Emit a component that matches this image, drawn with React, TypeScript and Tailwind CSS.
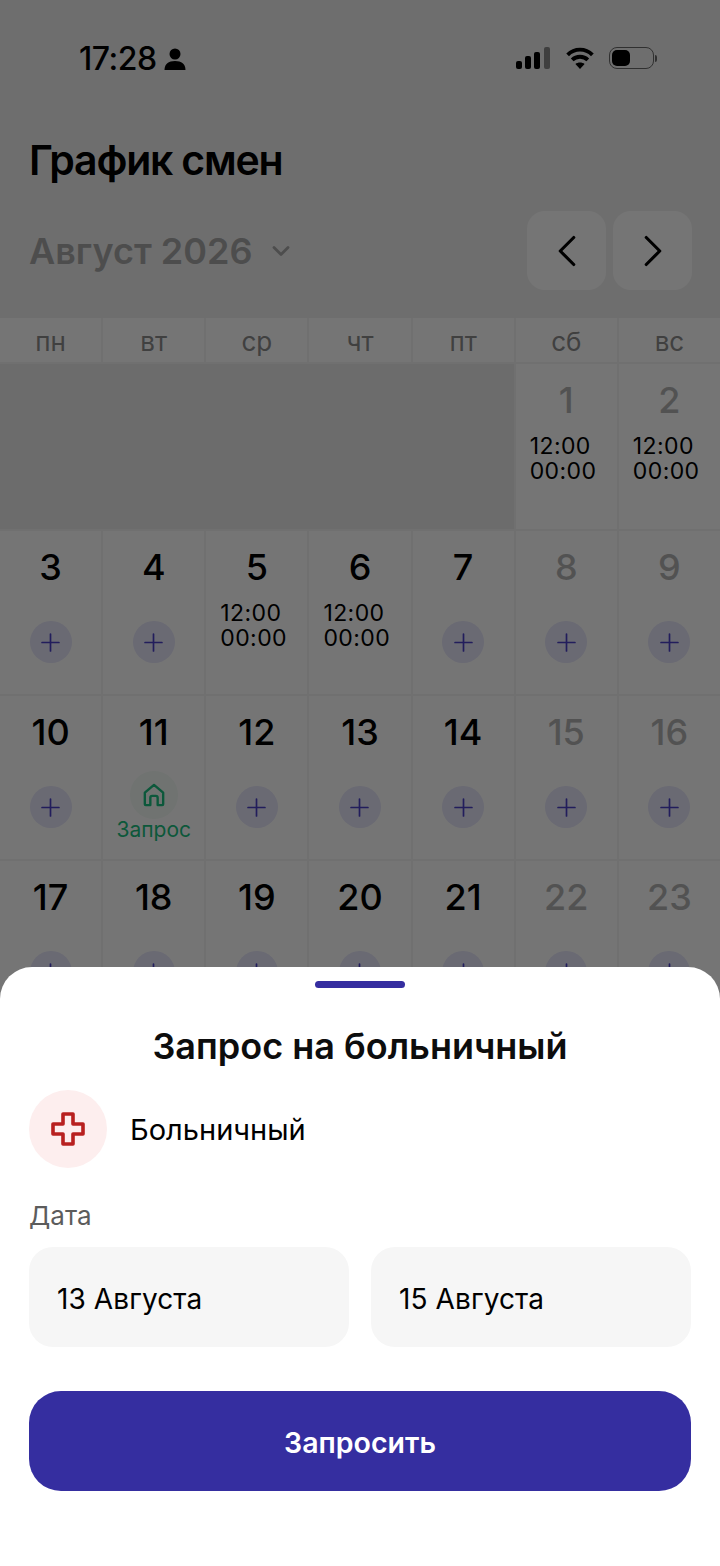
import React from 'react';
import { ChevronDown, ChevronLeft, ChevronRight, Plus } from 'lucide-react';

const WEEKDAYS = ['пн', 'вт', 'ср', 'чт', 'пт', 'сб', 'вс'];

type Day = { n: number; shift?: boolean; request?: boolean };

const DAYS: Day[] = [
  { n: 1, shift: true }, { n: 2, shift: true },
  { n: 3 }, { n: 4 }, { n: 5, shift: true }, { n: 6, shift: true }, { n: 7 }, { n: 8 }, { n: 9 },
  { n: 10 }, { n: 11, request: true }, { n: 12 }, { n: 13 }, { n: 14 }, { n: 15 }, { n: 16 },
  { n: 17 }, { n: 18 }, { n: 19 }, { n: 20 }, { n: 21 }, { n: 22 }, { n: 23 },
];

function StatusBar() {
  return (
    <div className="flex h-[116px] items-start justify-between pl-[79px] pr-[63px] pt-[41px]">
      <div className="flex items-center gap-[7px]">
        <span className="text-[32px] font-medium leading-[36px] tracking-[-0.5px] text-black">17:28</span>
        <svg width="22" height="22" viewBox="0 0 22 22" fill="black">
          <circle cx="11" cy="6" r="5.5" />
          <path d="M0.500 22c0-6 4-9 10.500-9s10.500 3 10.500 9z" />
        </svg>
      </div>
      <div className="flex items-center gap-[14px] pt-[6px]">
        <svg width="36" height="22" viewBox="0 0 36 22">
          <rect x="1" y="14" width="6" height="8" rx="2" fill="black" />
          <rect x="10" y="9" width="6" height="13" rx="2" fill="black" />
          <rect x="19" y="5" width="6" height="17" rx="2" fill="black" />
          <rect x="29" y="0" width="6" height="22" rx="2" fill="#8a8a8a" />
        </svg>
        <svg width="30" height="22" viewBox="0 0 30 24" fill="none" stroke="black" strokeWidth="4.2">
          <path d="M1.500 8.500C9 1 21 1 28.500 8.500" />
          <path d="M6.500 14C11 9.500 19 9.500 23.500 14" />
          <path d="M15 24l-5-5.500c2.500-2.200 7.500-2.200 10 0z" fill="black" stroke="none" />
        </svg>
        <div className="flex items-center gap-[1px]">
          <div className="flex h-[22px] w-[45px] items-center rounded-[8px] border-[1.5px] border-[#6a6a6a] p-[2px]">
            <div className="h-full w-[18px] rounded-[5px] bg-black" />
          </div>
          <div className="h-[7px] w-[2px] rounded-r-full bg-[#6a6a6a]" />
        </div>
      </div>
    </div>
  );
}

function Cell({ day }: { day: Day }) {
  const weekend = day.n % 7 === 1 || day.n % 7 === 2;
  return (
    <div className="flex flex-col items-center bg-white pt-[14px]">
      <span className={`text-[36px] font-medium leading-[44px] ${weekend ? 'text-[#b4b4b4]' : 'text-black'}`}>
        {day.n}
      </span>
      {day.shift ? (
        <div className="mt-[12px] w-full pl-[14px] text-[23px] leading-[25px] tracking-[0.4px] text-black">
          <div>12:00</div>
          <div>00:00</div>
        </div>
      ) : day.request ? (
        <div className="mt-[17px] flex flex-col items-center">
          <div className="flex h-[48px] w-[48px] items-center justify-center rounded-full bg-[#f3fbf6]">
            <svg width="22" height="24" viewBox="0 0 24 26" fill="none" stroke="#1cc080" strokeWidth="2.600" strokeLinejoin="round">
              <path d="M2 10.500 12 2l10 8.500V23a1 1 0 0 1-1 1h-5v-8a2 2 0 0 0-2-2h-4a2 2 0 0 0-2 2v8H3a1 1 0 0 1-1-1z" />
            </svg>
          </div>
          <span className="mt-[-1px] text-[21px] leading-[24px] text-[#1cc080]">Запрос</span>
        </div>
      ) : (
        <div className="mt-[32px] flex h-[42px] w-[42px] items-center justify-center rounded-full bg-[#e6e6fa]">
          <Plus size={29} strokeWidth={1.400} className="text-[#4a40c8]" />
        </div>
      )}
    </div>
  );
}

export default function App() {
  return (
    <div className="relative h-[1566px] w-[720px] overflow-hidden bg-[#f0f0f0] font-['Inter','Liberation_Sans',sans-serif]">
      <StatusBar />
      <h1 className="mt-[20px] pl-[29px] text-[41px] font-semibold leading-[48px] tracking-[-1.2px] text-black">
        График смен
      </h1>
      <div className="mt-[27px] flex items-center justify-between pl-[29px] pr-[28px]">
        <div className="flex items-center gap-[14px]">
          <span className="text-[36px] font-semibold leading-[44px] text-[#a8a8a8]">Август 2026</span>
          <ChevronDown size={28} strokeWidth={2.400} className="text-[#a8a8a8]" />
        </div>
        <div className="flex gap-[7px]">
          <button className="flex h-[79px] w-[79px] items-center justify-center rounded-[18px] bg-white">
            <ChevronLeft size={54} strokeWidth={1.400} className="text-black" />
          </button>
          <button className="flex h-[79px] w-[79px] items-center justify-center rounded-[18px] bg-white">
            <ChevronRight size={54} strokeWidth={1.400} className="text-black" />
          </button>
        </div>
      </div>
      <div className="mt-[28px] grid grid-cols-7 grid-rows-[44px_165px_163px_163px_163px] gap-[2px] bg-[#f3f3f3]">
        {WEEKDAYS.map((d) => (
          <div key={d} className="flex items-center justify-center bg-white pt-[3px] text-[26px] text-[#8c8c8c]">
            {d}
          </div>
        ))}
        <div className="col-span-5 bg-[#ebebeb]" />
        {DAYS.map((day) => (
          <Cell key={day.n} day={day} />
        ))}
      </div>

      <div className="absolute inset-0 bg-black/[.54]" />

      <div className="absolute inset-x-0 bottom-0 h-[599px] rounded-t-[32px] bg-white px-[29px] pt-[14px]">
        <div className="mx-auto h-[7px] w-[90px] rounded-full bg-[#352ea0]" />
        <h2 className="mt-[36px] text-center text-[36px] font-semibold leading-[44px] text-[#0d0d0d]">
          Запрос на больничный
        </h2>
        <div className="mt-[22px] flex items-center gap-[23px]">
          <div className="flex h-[78px] w-[78px] items-center justify-center rounded-full bg-[#fdeeee]">
            <svg width="34" height="34" viewBox="0 0 34 34" fill="none" stroke="#b8201f" strokeWidth="3.600" strokeLinejoin="round">
              <path d="M12 2h10v10h10v10H22v10H12V22H2V12h10z" />
            </svg>
          </div>
          <span className="pt-[1px] text-[29px] leading-[36px] text-black">Больничный</span>
        </div>
        <div className="mt-[32px] text-[26px] leading-[32px] text-[#5c5c5c]">Дата</div>
        <div className="mt-[15px] flex gap-[22px]">
          <div className="flex h-[100px] flex-1 items-center rounded-[24px] bg-[#f6f6f6] pl-[28px] pt-[3px] text-[28px] tracking-[0.1px] text-black">
            13 Августа
          </div>
          <div className="flex h-[100px] flex-1 items-center rounded-[24px] bg-[#f6f6f6] pl-[28px] pt-[3px] text-[28px] tracking-[0.1px] text-black">
            15 Августа
          </div>
        </div>
        <button className="mt-[44px] flex h-[100px] w-full items-center justify-center rounded-[32px] bg-[#352ea0] pt-[4px] text-[28.5px] font-semibold text-white">
          Запросить
        </button>
      </div>
    </div>
  );
}
